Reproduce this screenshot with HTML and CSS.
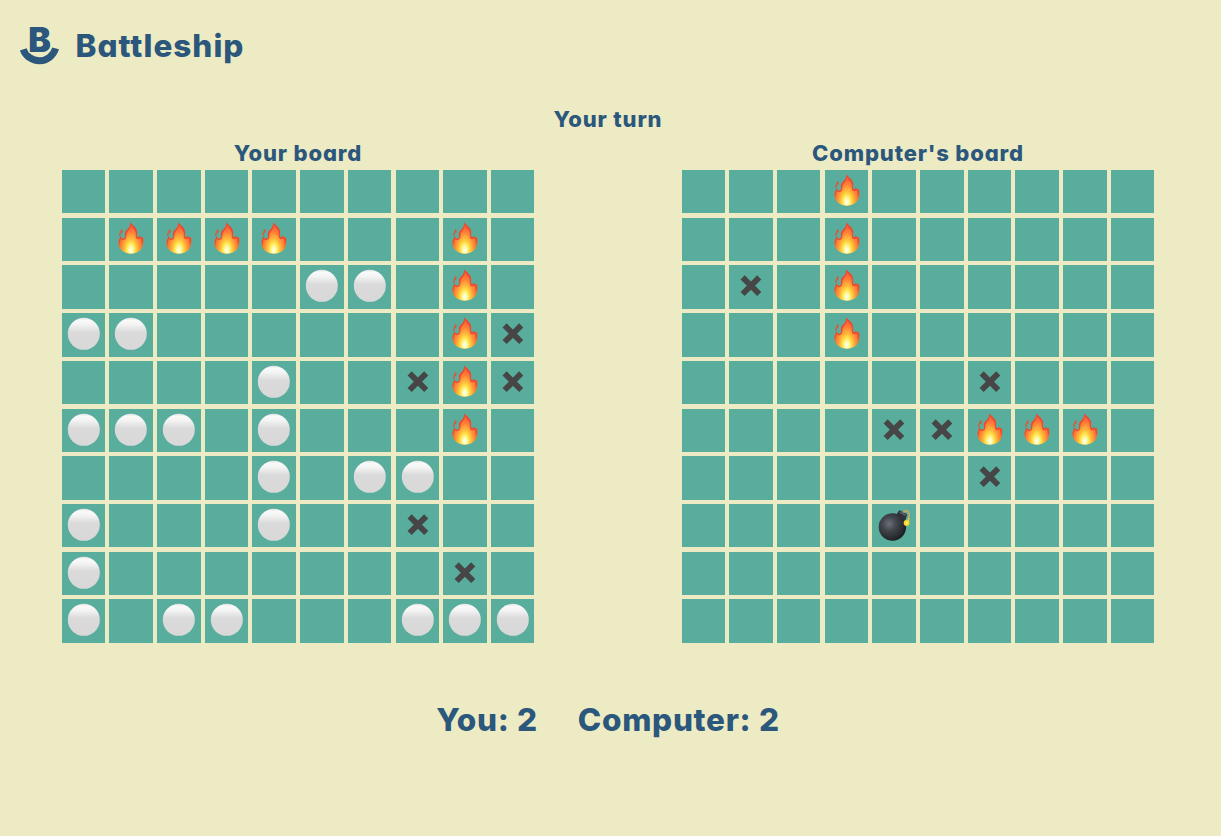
FILE: index.html
```html
<!DOCTYPE html>
<html lang="en">
<head>
<meta charset="utf-8">
<title>Battleship</title>
<link rel="stylesheet" href="styles.css">
</head>
<body>
<svg class="sprites" aria-hidden="true">
  <defs>
    <linearGradient id="flame-edge" x1="0" y1="0" x2="0" y2="1">
      <stop offset="0" stop-color="#ea4a34"/><stop offset=".62" stop-color="#fa4524"/><stop offset=".82" stop-color="#ff8a1c"/><stop offset="1" stop-color="#fdd06a"/>
    </linearGradient>
    <radialGradient id="flame-core" gradientUnits="userSpaceOnUse" cx="37" cy="84" r="74" gradientTransform="translate(37 84) scale(.58 1) translate(-37 -84)">
      <stop offset="0" stop-color="#fffff4"/><stop offset=".14" stop-color="#fffbb0"/><stop offset=".32" stop-color="#ffe044"/><stop offset=".5" stop-color="#ffb038"/><stop offset=".72" stop-color="#ff8038"/><stop offset="1" stop-color="#f85a38"/>
    </radialGradient>
    <linearGradient id="disc" x1="0" y1="0" x2="0" y2="1">
      <stop offset="0" stop-color="#e0e0e0"/><stop offset=".08" stop-color="#fafafa"/><stop offset=".2" stop-color="#f4f4f4"/><stop offset=".45" stop-color="#dadada"/><stop offset="1" stop-color="#d8d8d8"/>
    </linearGradient>
    <radialGradient id="iron" cx=".38" cy=".38" r=".65">
      <stop offset="0" stop-color="#6b7078"/><stop offset=".4" stop-color="#42464c"/><stop offset="1" stop-color="#1d1f22"/>
    </radialGradient>
    <radialGradient id="spark"><stop offset="0" stop-color="#fffbd0"/><stop offset=".45" stop-color="#ffe02e"/><stop offset="1" stop-color="#f6c62b"/></radialGradient>
  </defs>
  <symbol id="fire" viewBox="0 0 43.4 43.4">
    <g transform="translate(9.5 4.2) scale(.333)">
      <path fill="url(#flame-edge)" d="M35 0C41 9 57 15 56 32C55 40 56 45 59 46C62 46 63 44 62 40C66 42 68 45 70 46L74 45C73 50 75 55 74 62C73 80 61 95 37 95C15 95 0 80 0 62C0 54 4 50 5 40C8 45 8 48 12 49C17 51 20 48 20 44C18 36 19 28 24 24C32 18 35 10 35 0ZM10 20C14 27 12 32 6 34C3 28 8 26 10 20ZM4 31C8 36 7 40 3 41C0 37 3 35 4 31Z"/>
      <path fill="url(#flame-core)" d="M37 8C41 17 52 22 52 35C51 45 53 51 58 51C63 51 65 50 66 47C71 56 71 68 67 77C61 88 50 94 37 94C22 94 12 88 7 77C3 69 4 58 7 50C9 54 13 55 17 53C25 50 23 43 24 36C26 26 36 24 37 8Z"/>
      <path fill="none" stroke="#ffc04e" stroke-opacity=".45" stroke-width="3" d="M40 34C32 40 36 49 29 57M43 40C40 48 46 57 51 64"/>
    </g>
  </symbol>
  <symbol id="ship" viewBox="0 0 43.4 43.4"><circle cx="21.8" cy="20.8" r="16" fill="url(#disc)"/></symbol>
  <symbol id="miss" viewBox="0 0 43.4 43.4"><path d="M13.6 12.4 30.2 29M30.2 12.4 13.6 29" stroke="#464646" stroke-width="5.8"/></symbol>
  <symbol id="bomb" viewBox="0 0 43.4 43.4">
    <circle cx="20.4" cy="23" r="13.7" fill="url(#iron)"/>
    <path d="M24.6 11.2 27.4 6.8 34.6 10.6 32.8 16.4Z" fill="#303338" stroke="#303338" stroke-linejoin="round"/>
    <path d="M27.8 7.9 33.6 11.3" stroke="#626870" stroke-width="1.4"/>
    <path d="M31.4 8.6C34 4.8 37.6 7 37 12L35.6 18.5" fill="none" stroke="#c6ab69" stroke-width="1.6"/>
    <circle cx="34.6" cy="19" r="3" fill="url(#spark)"/>
    <path d="M37 14.2 36.4 18" stroke="#f9d83b"/>
  </symbol>
</svg>

<header class="header">
  <svg class="logo" viewBox="0 0 40 40" role="img" aria-label="B">
    <path class="logo-hull" d="M3.2 23.3A17 17 0 0 0 35.6 22.4"/>
    <text class="logo-letter" x="8.3" y="25.6" textLength="22.6" lengthAdjust="spacingAndGlyphs">B</text>
  </svg>
  <h1 class="title">Battleship</h1>
</header>

<main class="game">
  <h2 class="turn">Your turn</h2>
  <div class="boards">
    <section class="side">
      <h2 class="board-title">Your board</h2>
      <div class="board" data-rows="..........|.ffff...f.|.....oo.f.|oo......fx|....o..xfx|ooo.o...f.|....o.oo..|o...o..x..|o.......x.|o.oo...ooo"></div>
    </section>
    <section class="side">
      <h2 class="board-title">Computer's board</h2>
      <div class="board" data-rows="...f......|...f......|.x.f......|...f......|......x...|....xxfff.|......x...|....b.....|..........|.........."></div>
    </section>
  </div>
  <div class="score">
    <span>You: 2</span>
    <span>Computer: 2</span>
  </div>
</main>
<script src="board.js"></script>
</body>
</html>
```
FILE: styles.css
```css
* { box-sizing: border-box; }

body {
  margin: 0;
  min-height: 836px;
  background: #edebc3;
  color: #2b577c;
  font-family: Inter, "Open Sans", sans-serif;
  font-feature-settings: "cv11" 1;
}

.sprites { position: absolute; width: 0; height: 0; }

.header {
  display: flex;
  align-items: center;
  gap: 16px;
  height: 92px;
  padding-left: 19.5px;
}

.logo { width: 40px; height: 40px; overflow: visible; }
.logo-hull { fill: none; stroke: #2b577c; stroke-width: 7; }
.logo-letter {
  font-family: Inter, sans-serif;
  font-weight: 900;
  font-size: 33.5px;
  fill: #2b577c;
  stroke: #edebc3;
  stroke-width: 2px;
  paint-order: stroke;
}

.title {
  margin: 0;
  font-size: 31.5px;
  line-height: 40px;
  font-weight: 800;
  letter-spacing: 1px;
  white-space: nowrap;
}

.game {
  display: flex;
  flex-direction: column;
  align-items: center;
  width: 1216px;
}

.turn, .board-title {
  margin: 0;
  font-size: 22px;
  line-height: 34px;
  font-weight: 800;
  letter-spacing: 0.85px;
  white-space: nowrap;
}

.turn { padding-top: 10px; }

.boards { display: flex; gap: 147.26px; }

.side {
  display: flex;
  flex-direction: column;
  align-items: center;
  width: 472.74px;
}

.board {
  display: grid;
  grid-template-columns: repeat(10, 43.44px);
  grid-auto-rows: 43.44px;
  column-gap: 4.26px;
  row-gap: 4.29px;
  margin-top: -0.1px;
}

.cell { background: #58ad9d; }
.cell svg { display: block; width: 100%; height: 100%; }

.score {
  display: flex;
  gap: 40px;
  margin-top: 57px;
  font-size: 31.5px;
  line-height: 40px;
  font-weight: 800;
  letter-spacing: 0.7px;
  white-space: nowrap;
}
```
FILE: board.js
```js
const icons = { f: "fire", o: "ship", x: "miss", b: "bomb" };

document.querySelectorAll(".board").forEach((board) => {
  for (const mark of board.dataset.rows.replaceAll("|", "")) {
    const cell = document.createElement("div");
    cell.className = "cell";
    if (icons[mark]) {
      cell.innerHTML = `<svg><use href="#${icons[mark]}"/></svg>`;
    }
    board.append(cell);
  }
});
```
